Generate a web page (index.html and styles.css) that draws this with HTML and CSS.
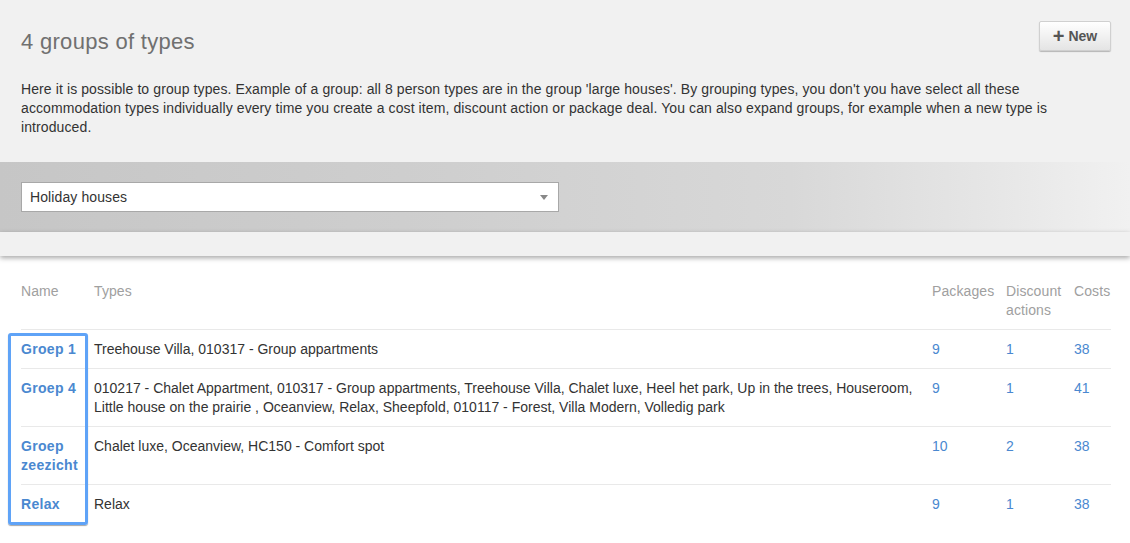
FILE: index.html
```html
<!DOCTYPE html>
<html lang="en">
  <head>
    <meta charset="UTF-8" />
    <meta name="viewport" content="width=device-width, initial-scale=1.0" />
    <title>Groups of types</title>
    <link rel="stylesheet" href="styles.css">
  </head>
  <body>
    <header class="top">
      <div class="titel-rij">
        <h1>4 groups of types</h1>
        <button class="nieuw"><span class="plus">+</span> New</button>
      </div>
      <p class="intro">
        Here it is possible to group types. Example of a group: all 8 person types are in the group 'large houses'. By grouping types, you don't you have select all these accommodation types individually every time you create a cost item, discount action or package deal. You can also expand groups, for example when a new type is introduced.
      </p>
    </header>

    <section class="filter">
      <div class="keuze">
        <span>Holiday houses</span>
        <span class="pijl"></span>
      </div>
    </section>
    <div class="strook"></div>

    <main class="lijst">
      <table>
        <thead>
          <tr>
            <th class="col-naam">Name</th>
            <th>Types</th>
            <th class="col-pak">Packages</th>
            <th class="col-korting">Discount actions</th>
            <th class="col-kosten">Costs</th>
          </tr>
        </thead>
        <tbody>
          <tr>
            <td><a class="naam">Groep 1</a></td>
            <td>Treehouse Villa, 010317 - Group appartments</td>
            <td><a>9</a></td>
            <td><a>1</a></td>
            <td><a>38</a></td>
          </tr>
          <tr>
            <td><a class="naam">Groep 4</a></td>
            <td>010217 - Chalet Appartment, 010317 - Group appartments, Treehouse Villa, Chalet luxe, Heel het park, Up in the trees, Houseroom, Little house on the prairie , Oceanview, Relax, Sheepfold, 010117 - Forest, Villa Modern, Volledig park</td>
            <td><a>9</a></td>
            <td><a>1</a></td>
            <td><a>41</a></td>
          </tr>
          <tr>
            <td><a class="naam">Groep zeezicht</a></td>
            <td>Chalet luxe, Oceanview, HC150 - Comfort spot</td>
            <td><a>10</a></td>
            <td><a>2</a></td>
            <td><a>38</a></td>
          </tr>
          <tr>
            <td><a class="naam">Relax</a></td>
            <td>Relax</td>
            <td><a>9</a></td>
            <td><a>1</a></td>
            <td><a>38</a></td>
          </tr>
        </tbody>
      </table>
      <div class="markering"></div>
    </main>
  </body>
</html>
```

FILE: styles.css
```css
body {
  margin: 0;
  background-color: white;
  font-family: "Liberation Sans", Arial, sans-serif;
  font-size: 14px;
  letter-spacing: 0.1px;
  color: #333;
  min-height: 543px;
}
.top {
  background-color: #f1f1f1;
  padding: 21px 19px 25px 21px;
}
.titel-rij {
  display: flex;
  justify-content: space-between;
  align-items: flex-start;
}
h1 {
  margin: 8px 0 0 0;
  font-size: 22px;
  line-height: 26px;
  font-weight: 300;
  letter-spacing: 0.3px;
  color: #707070;
}
.nieuw {
  width: 72px;
  height: 30px;
  padding: 0;
  border: 1px solid #d0d0d0;
  border-radius: 2px;
  background: linear-gradient(#ffffff, #e4e4e4);
  box-shadow: 0 1px 1px rgba(0, 0, 0, 0.25);
  font-family: "Liberation Sans", Arial, sans-serif;
  font-size: 14px;
  font-weight: bold;
  color: #555;
  cursor: pointer;
}
.plus {
  font-size: 20px;
  line-height: 10px;
  vertical-align: -2px;
}
.intro {
  margin: 25px 0 0 0;
  line-height: 19px;
}
.filter {
  padding: 20px 21px;
  background: linear-gradient(to right, #c6c6c6, #cfcfcf 40%, #d8d8d8 70%, #e8e8e8 90%, #f1f1f1);
}
.keuze {
  width: 520px;
  height: 28px;
  padding: 0 8px 0 8px;
  display: flex;
  justify-content: space-between;
  align-items: center;
  background-color: white;
  border: 1px solid #a8a8a8;
  color: #333;
}
.pijl {
  width: 0;
  height: 0;
  border-left: 4px solid transparent;
  border-right: 4px solid transparent;
  border-top: 5px solid #888;
  margin-right: 2px;
}
.strook {
  height: 24px;
  background-color: #f1f1f1;
  box-shadow: 0 2px 5px rgba(0, 0, 0, 0.35);
  position: relative;
}
.lijst {
  position: relative;
  padding: 16px 19px 0 21px;
}
table {
  width: 100%;
  border-collapse: collapse;
}
th,
td {
  text-align: left;
  vertical-align: top;
  padding: 10px 10px 9px 0;
  line-height: 19px;
}
th {
  font-weight: normal;
  color: #a0a0a0;
}
td {
  border-top: 1px solid #e9e9e9;
  letter-spacing: 0;
}
th:last-child,
td:last-child {
  padding-right: 0;
}
.col-naam {
  width: 63px;
}
.col-pak {
  width: 64px;
}
.col-korting {
  width: 58px;
}
.col-kosten {
  width: 37px;
}
a {
  color: #4a88d0;
  cursor: pointer;
}
.naam {
  font-weight: bold;
  letter-spacing: 0.3px;
}
.markering {
  position: absolute;
  left: 8px;
  top: 77px;
  width: 74px;
  height: 186px;
  border: 3px solid #5fa3f7;
  border-radius: 3px;
  box-shadow: 0 1px 1px rgba(0, 0, 0, 0.35);
}
```
